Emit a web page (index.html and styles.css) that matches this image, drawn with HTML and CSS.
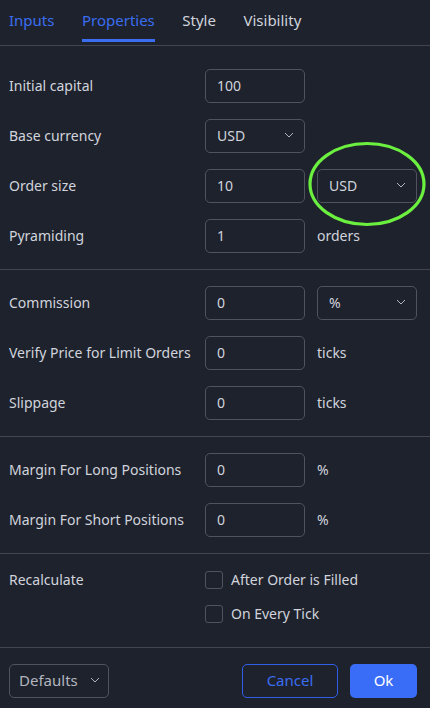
FILE: index.html
```html
<!DOCTYPE html>
<html>
<head>
<meta charset="utf-8">
<link rel="stylesheet" href="styles.css">
</head>
<body>
<div class="dialog">
  <div class="tabs">
    <div class="tab tab-blue">Inputs</div>
    <div class="tab tab-active">Properties</div>
    <div class="tab">Style</div>
    <div class="tab">Visibility</div>
  </div>

  <div class="section section-first">
    <div class="row">
      <div class="label">Initial capital</div>
      <div class="field">100</div>
    </div>
    <div class="row">
      <div class="label">Base currency</div>
      <div class="field select">USD<svg class="chev" viewBox="0 0 10 6" width="10" height="6"><path d="M1 1l4 4 4-4" fill="none" stroke="#b2b5be" stroke-width="1"/></svg></div>
    </div>
    <div class="row">
      <div class="label">Order size</div>
      <div class="field">10</div>
      <div class="field select">USD<svg class="chev" viewBox="0 0 10 6" width="10" height="6"><path d="M1 1l4 4 4-4" fill="none" stroke="#b2b5be" stroke-width="1"/></svg></div>
      <svg class="ring" width="124" height="88" viewBox="0 0 124 88"><ellipse cx="62" cy="44" rx="57" ry="40.5" fill="none" stroke="#6cf03f" stroke-width="3.2"/></svg>
    </div>
    <div class="row">
      <div class="label">Pyramiding</div>
      <div class="field">1</div>
      <div class="unit">orders</div>
    </div>
  </div>

  <div class="section">
    <div class="row">
      <div class="label">Commission</div>
      <div class="field">0</div>
      <div class="field select">%<svg class="chev" viewBox="0 0 10 6" width="10" height="6"><path d="M1 1l4 4 4-4" fill="none" stroke="#b2b5be" stroke-width="1"/></svg></div>
    </div>
    <div class="row">
      <div class="label">Verify Price for Limit Orders</div>
      <div class="field">0</div>
      <div class="unit">ticks</div>
    </div>
    <div class="row">
      <div class="label">Slippage</div>
      <div class="field">0</div>
      <div class="unit">ticks</div>
    </div>
  </div>

  <div class="section">
    <div class="row">
      <div class="label">Margin For Long Positions</div>
      <div class="field">0</div>
      <div class="unit">%</div>
    </div>
    <div class="row">
      <div class="label">Margin For Short Positions</div>
      <div class="field">0</div>
      <div class="unit">%</div>
    </div>
  </div>

  <div class="section section-checks">
    <div class="check-row">
      <div class="label">Recalculate</div>
      <div class="check"><span class="box"></span><span class="check-text">After Order is Filled</span></div>
    </div>
    <div class="check-row">
      <div class="label"></div>
      <div class="check"><span class="box"></span><span class="check-text">On Every Tick</span></div>
    </div>
  </div>

  <div class="footer">
    <div class="btn btn-defaults">Defaults<svg class="chev" viewBox="0 0 10 6" width="10" height="6"><path d="M1 1l4 4 4-4" fill="none" stroke="#b2b5be" stroke-width="1"/></svg></div>
    <div class="spacer"></div>
    <div class="btn btn-cancel">Cancel</div>
    <div class="btn btn-ok">Ok</div>
  </div>
</div>
</body>
</html>
```

FILE: styles.css
```css
html, body {
  margin: 0;
  padding: 0;
  background: #1e222d;
}
body {
  font-family: "Noto Sans", "DejaVu Sans", sans-serif;
  color: #d1d4dc;
  font-size: 14px;
  width: 430px;
  height: 708px;
  overflow: hidden;
}
.dialog {
  display: flex;
  flex-direction: column;
}
.tabs {
  display: flex;
  padding-left: 9px;
  gap: 27.5px;
  border-bottom: 1px solid #434651;
  box-sizing: border-box;
  height: 46px;
}
.tab {
  font-size: 15px;
  color: #d1d4dc;
  line-height: 41px;
  border-bottom: 3px solid transparent;
  height: 42px;
  box-sizing: border-box;
  padding-bottom: 1px;
}
.tab-blue {
  color: #3a6df0;
}
.tab-active {
  color: #3a6df0;
  border-bottom-color: #3a6df0;
}
.section {
  display: flex;
  flex-direction: column;
  gap: 16px;
  padding: 16px 0 16px 9px;
  border-bottom: 1px solid #434651;
}
.section-first {
  padding-top: 23px;
}
.row {
  display: flex;
  align-items: center;
  height: 34px;
  gap: 12px;
  position: relative;
}
.label {
  width: 184px;
  flex: none;
  white-space: nowrap;
  padding-bottom: 2px;
}
.field {
  width: 100px;
  height: 34px;
  box-sizing: border-box;
  border: 1px solid #50535e;
  border-radius: 5px;
  padding-left: 11px;
  padding-bottom: 2px;
  display: flex;
  align-items: center;
  flex: none;
  position: relative;
}
.select {
  justify-content: space-between;
  padding-right: 10px;
}
.chev {
  display: block;
}
.unit {
  color: #d1d4dc;
  padding-bottom: 2px;
}
.ring {
  position: absolute;
  left: 296px;
  top: -29px;
  pointer-events: none;
}
.section-checks {
  padding-top: 17px;
  padding-bottom: 24px;
}
.check-row {
  display: flex;
  align-items: center;
  height: 18px;
  gap: 12px;
}
.check {
  display: flex;
  align-items: center;
  gap: 8px;
}
.check-text {
  padding-bottom: 2px;
}
.box {
  width: 18px;
  height: 18px;
  box-sizing: border-box;
  border: 1px solid #50535e;
  border-radius: 3px;
}
.footer {
  display: flex;
  align-items: center;
  padding: 16px 13px 0 9px;
  gap: 12px;
}
.spacer {
  flex: 1;
}
.btn {
  height: 34px;
  box-sizing: border-box;
  border-radius: 5px;
  display: flex;
  align-items: center;
  justify-content: center;
  font-size: 15px;
  padding-bottom: 2px;
}
.btn-defaults {
  width: 100px;
  border: 1px solid #50535e;
  justify-content: space-between;
  padding: 0 8px 2px 9px;
  color: #b2b5be;
}
.btn-cancel {
  width: 96px;
  border: 1px solid #2f5fe8;
  color: #3a6df0;
}
.btn-ok {
  width: 67px;
  background: #3a6df7;
  color: #ffffff;
}
```
